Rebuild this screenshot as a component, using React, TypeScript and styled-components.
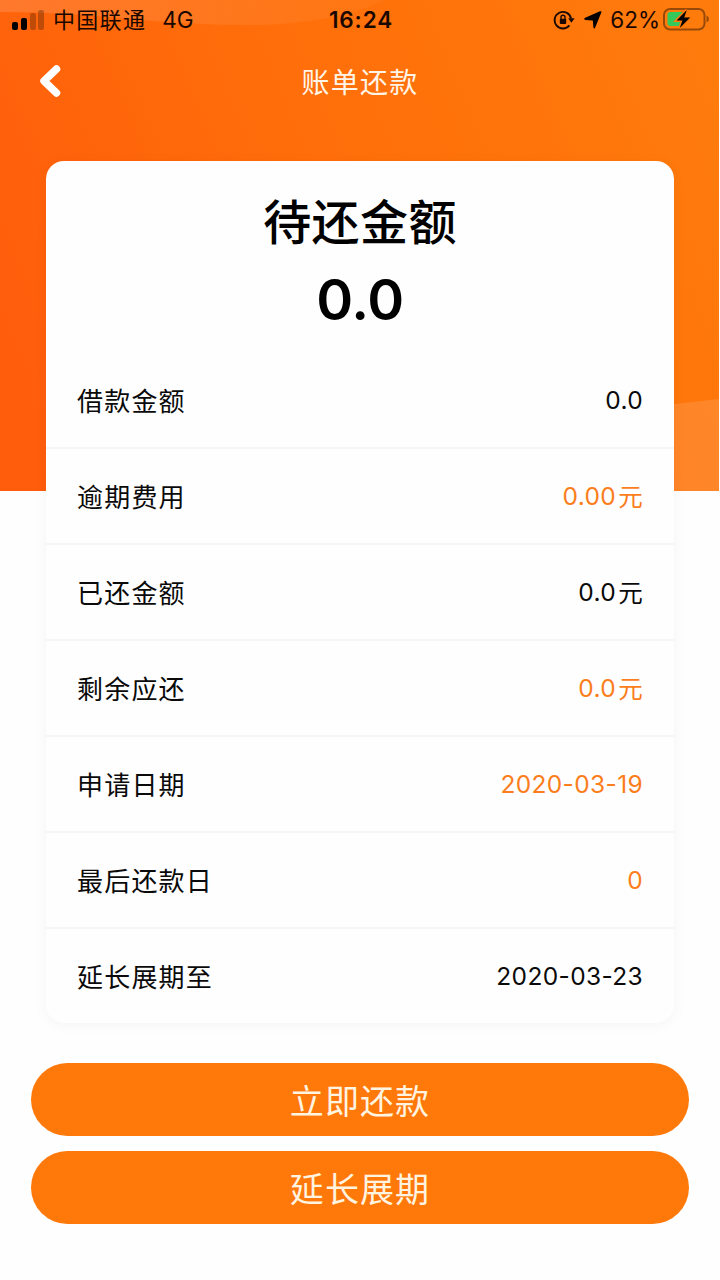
import React from "react";
import styled, { createGlobalStyle } from "styled-components";

const GlobalStyle = createGlobalStyle`
  * { box-sizing: border-box; }
  body {
    margin: 0;
    background: #fff;
    color: #0a0a0a;
    font-family: Inter, "Noto Sans CJK SC", sans-serif;
  }
`;

const Page = styled.div`
  position: relative;
  width: 720px;
  height: 1280px;
  overflow: hidden;
  background: #fefefe;
`;

const Backdrop = styled.svg`
  position: absolute;
  top: 0;
  left: 0;
  display: block;
`;

const Content = styled.div`
  position: relative;
  display: flex;
  flex-direction: column;
`;

const StatusBar = styled.header`
  display: grid;
  grid-template-columns: 1fr auto 1fr;
  align-items: center;
  height: 40px;
  padding: 0 10px 0 12px;
  color: #1a0800;
`;

const StatusGroup = styled.div<{ $end?: boolean }>`
  display: flex;
  align-items: center;
  justify-content: ${(p) => (p.$end ? "flex-end" : "flex-start")};
`;

const StatusText = styled.span<{ $size: number; $track?: number; $gap?: number }>`
  font-size: ${(p) => p.$size}px;
  line-height: 40px;
  letter-spacing: ${(p) => p.$track ?? 0}px;
  margin-left: ${(p) => p.$gap ?? 0}px;
  white-space: nowrap;
`;

const Clock = styled.time`
  font-size: 22.5px;
  font-weight: 600;
  line-height: 40px;
  letter-spacing: 0.9px;
`;

const Icon = styled.svg<{ $gap?: number }>`
  display: block;
  flex: none;
  margin-left: ${(p) => p.$gap ?? 0}px;
`;

const NavBar = styled.nav`
  display: grid;
  grid-template-columns: 100px 1fr 100px;
  align-items: center;
  height: 82px;
`;

const BackButton = styled.button`
  display: flex;
  padding: 0 0 0 38px;
  border: 0;
  background: none;
`;

const NavTitle = styled.h1`
  margin: 0;
  padding-top: 3px;
  font-size: 28px;
  font-weight: 400;
  line-height: 40px;
  letter-spacing: 1.2px;
  text-align: center;
  color: #fff4e6;
`;

const Card = styled.main`
  margin: 39px 46px 0;
  height: 862px;
  border-radius: 18px;
  background: #fefefe;
  box-shadow: 0 2px 14px rgba(0, 0, 0, 0.045);
`;

const Summary = styled.section`
  display: flex;
  flex-direction: column;
  align-items: center;
  height: 192px;
  padding-top: 26px;
  color: #000;
`;

const SummaryLabel = styled.h2`
  margin: 0;
  font-size: 48px;
  font-weight: 500;
  line-height: 72px;
  letter-spacing: 0.4px;
`;

const SummaryAmount = styled.strong`
  font-size: 56px;
  font-weight: 600;
  line-height: 82px;
  letter-spacing: -0.3px;
`;

const Row = styled.div`
  display: flex;
  align-items: center;
  justify-content: space-between;
  height: 96px;
  padding: 0 31px;
  border-bottom: 2px solid #f6f6f6;
  &:last-child {
    border-bottom-color: transparent;
  }
`;

const RowLabel = styled.span`
  padding-top: 4px;
  font-size: 26px;
  line-height: 40px;
  letter-spacing: 1.2px;
`;

const RowValue = styled.span<{ $accent?: boolean }>`
  display: flex;
  align-items: center;
  font-size: 24.5px;
  line-height: 40px;
  letter-spacing: 0.35px;
  color: ${(p) => (p.$accent ? "#fb7d1c" : "#0a0a0a")};
`;

const Unit = styled.span`
  margin-left: 2px;
  padding-top: 2px;
`;

const Actions = styled.footer`
  display: flex;
  flex-direction: column;
  gap: 15px;
  margin-top: 40px;
  padding: 0 31px;
`;

const ActionButton = styled.button`
  height: 73px;
  padding: 4px 0 0;
  border: 0;
  border-radius: 37px;
  background: #ff780a;
  color: #fff4e0;
  font-family: inherit;
  font-size: 34px;
  font-weight: 400;
  line-height: 69px;
  letter-spacing: 1.1px;
`;

const rows = [
  { label: "借款金额", value: "0.0" },
  { label: "逾期费用", value: "0.00", unit: "元", accent: true },
  { label: "已还金额", value: "0.0", unit: "元" },
  { label: "剩余应还", value: "0.0", unit: "元", accent: true },
  { label: "申请日期", value: "2020-03-19", accent: true },
  { label: "最后还款日", value: "0", accent: true },
  { label: "延长展期至", value: "2020-03-23" },
];

export default function App() {
  return (
    <Page>
      <GlobalStyle />
      <Backdrop width="719" height="491" viewBox="0 0 719 491">
        <defs>
          <linearGradient id="base" gradientUnits="userSpaceOnUse" x1="0" y1="400" x2="720" y2="100">
            <stop offset="0" stopColor="#ff5c0c" />
            <stop offset="0.5" stopColor="#ff6e0a" />
            <stop offset="1" stopColor="#ff7b0c" />
          </linearGradient>
          <linearGradient id="wave" x1="0" y1="0" x2="1" y2="0">
            <stop offset="0" stopColor="#fff" stopOpacity="0.14" />
            <stop offset="1" stopColor="#fff" stopOpacity="0.03" />
          </linearGradient>
        </defs>
        <rect width="719" height="491" fill="url(#base)" />
        <path d="M0 12C100 12 150 25 250 25Q330 25 385 0H0Z" fill="url(#wave)" />
        <path d="M640 408L720 399V491H640Z" fill="#fff" fillOpacity="0.12" />
      </Backdrop>
      <Content>
        <StatusBar>
          <StatusGroup>
            <Icon width="32" height="20" viewBox="0 0 32 20">
              <rect x="0" y="12" width="6" height="8" rx="2" fill="#000" />
              <rect x="9" y="8" width="6" height="12" rx="2" fill="#000" />
              <rect x="18" y="3" width="6" height="17" rx="2" fill="#000" fillOpacity="0.25" />
              <rect x="26" y="0" width="6" height="20" rx="2" fill="#000" fillOpacity="0.25" />
            </Icon>
            <StatusText $size={22} $track={1.3} $gap={9}>中国联通</StatusText>
            <StatusText $size={22.5} $gap={16}>4G</StatusText>
          </StatusGroup>
          <Clock>16:24</Clock>
          <StatusGroup $end>
            <Icon width="22" height="20" viewBox="0 0 22 20" fill="none" stroke="#1a0800" strokeWidth="1.9">
              <path d="M16.4 15.4A8.3 8.3 0 1 1 18 8.2" />
              <path d="M15.2 8.2H21.6L18.4 12.7Z" fill="#1a0800" stroke="none" />
              <rect x="6.8" y="8.8" width="6.4" height="5.2" rx="1" fill="#1a0800" stroke="none" />
              <path d="M8 9V7.2A2 2 0 0 1 12 7.2V9" strokeWidth="1.4" />
            </Icon>
            <Icon width="18" height="18" viewBox="0 0 18 18" $gap={9}>
              <path d="M17.4 1.2L11.2 16.6Q10.2 18.4 9.4 16.6L8.8 9.4L1.2 9Q-.8 8 1.2 6.8L16 .3Q18-.2 17.4 1.2Z" fill="#000" />
            </Icon>
            <StatusText $size={22.5} $gap={8}>62%</StatusText>
            <Icon width="48" height="24" viewBox="0 0 48 24" $gap={2}>
              <rect x="2" y="1" width="40.5" height="20.5" rx="6" fill="none" stroke="#000" strokeOpacity="0.4" strokeWidth="2" />
              <path d="M44.5 7.5Q47 8.5 47 11T44.5 14.5Z" fill="#000" fillOpacity="0.4" />
              <rect x="5.5" y="4" width="17" height="14" rx="3" fill="#34c759" />
              <path d="M24.8 2L14.6 12.6H20.4L17.8 20L28.2 9.4H22.2Z" fill="#000" stroke="#ff7b0b" strokeWidth="3" paintOrder="stroke" />
            </Icon>
          </StatusGroup>
        </StatusBar>
        <NavBar>
          <BackButton aria-label="返回">
            <Icon width="24" height="36" viewBox="0 0 24 36" fill="none" stroke="#fff" strokeWidth="7.5" strokeLinecap="round" strokeLinejoin="round">
              <path d="M18.5 6L6 18L18.5 30" />
            </Icon>
          </BackButton>
          <NavTitle>账单还款</NavTitle>
        </NavBar>
        <Card>
          <Summary>
            <SummaryLabel>待还金额</SummaryLabel>
            <SummaryAmount>0.0</SummaryAmount>
          </Summary>
          {rows.map((row) => (
            <Row key={row.label}>
              <RowLabel>{row.label}</RowLabel>
              <RowValue $accent={row.accent}>
                {row.value}
                {row.unit && <Unit>{row.unit}</Unit>}
              </RowValue>
            </Row>
          ))}
        </Card>
        <Actions>
          <ActionButton>立即还款</ActionButton>
          <ActionButton>延长展期</ActionButton>
        </Actions>
      </Content>
    </Page>
  );
}
